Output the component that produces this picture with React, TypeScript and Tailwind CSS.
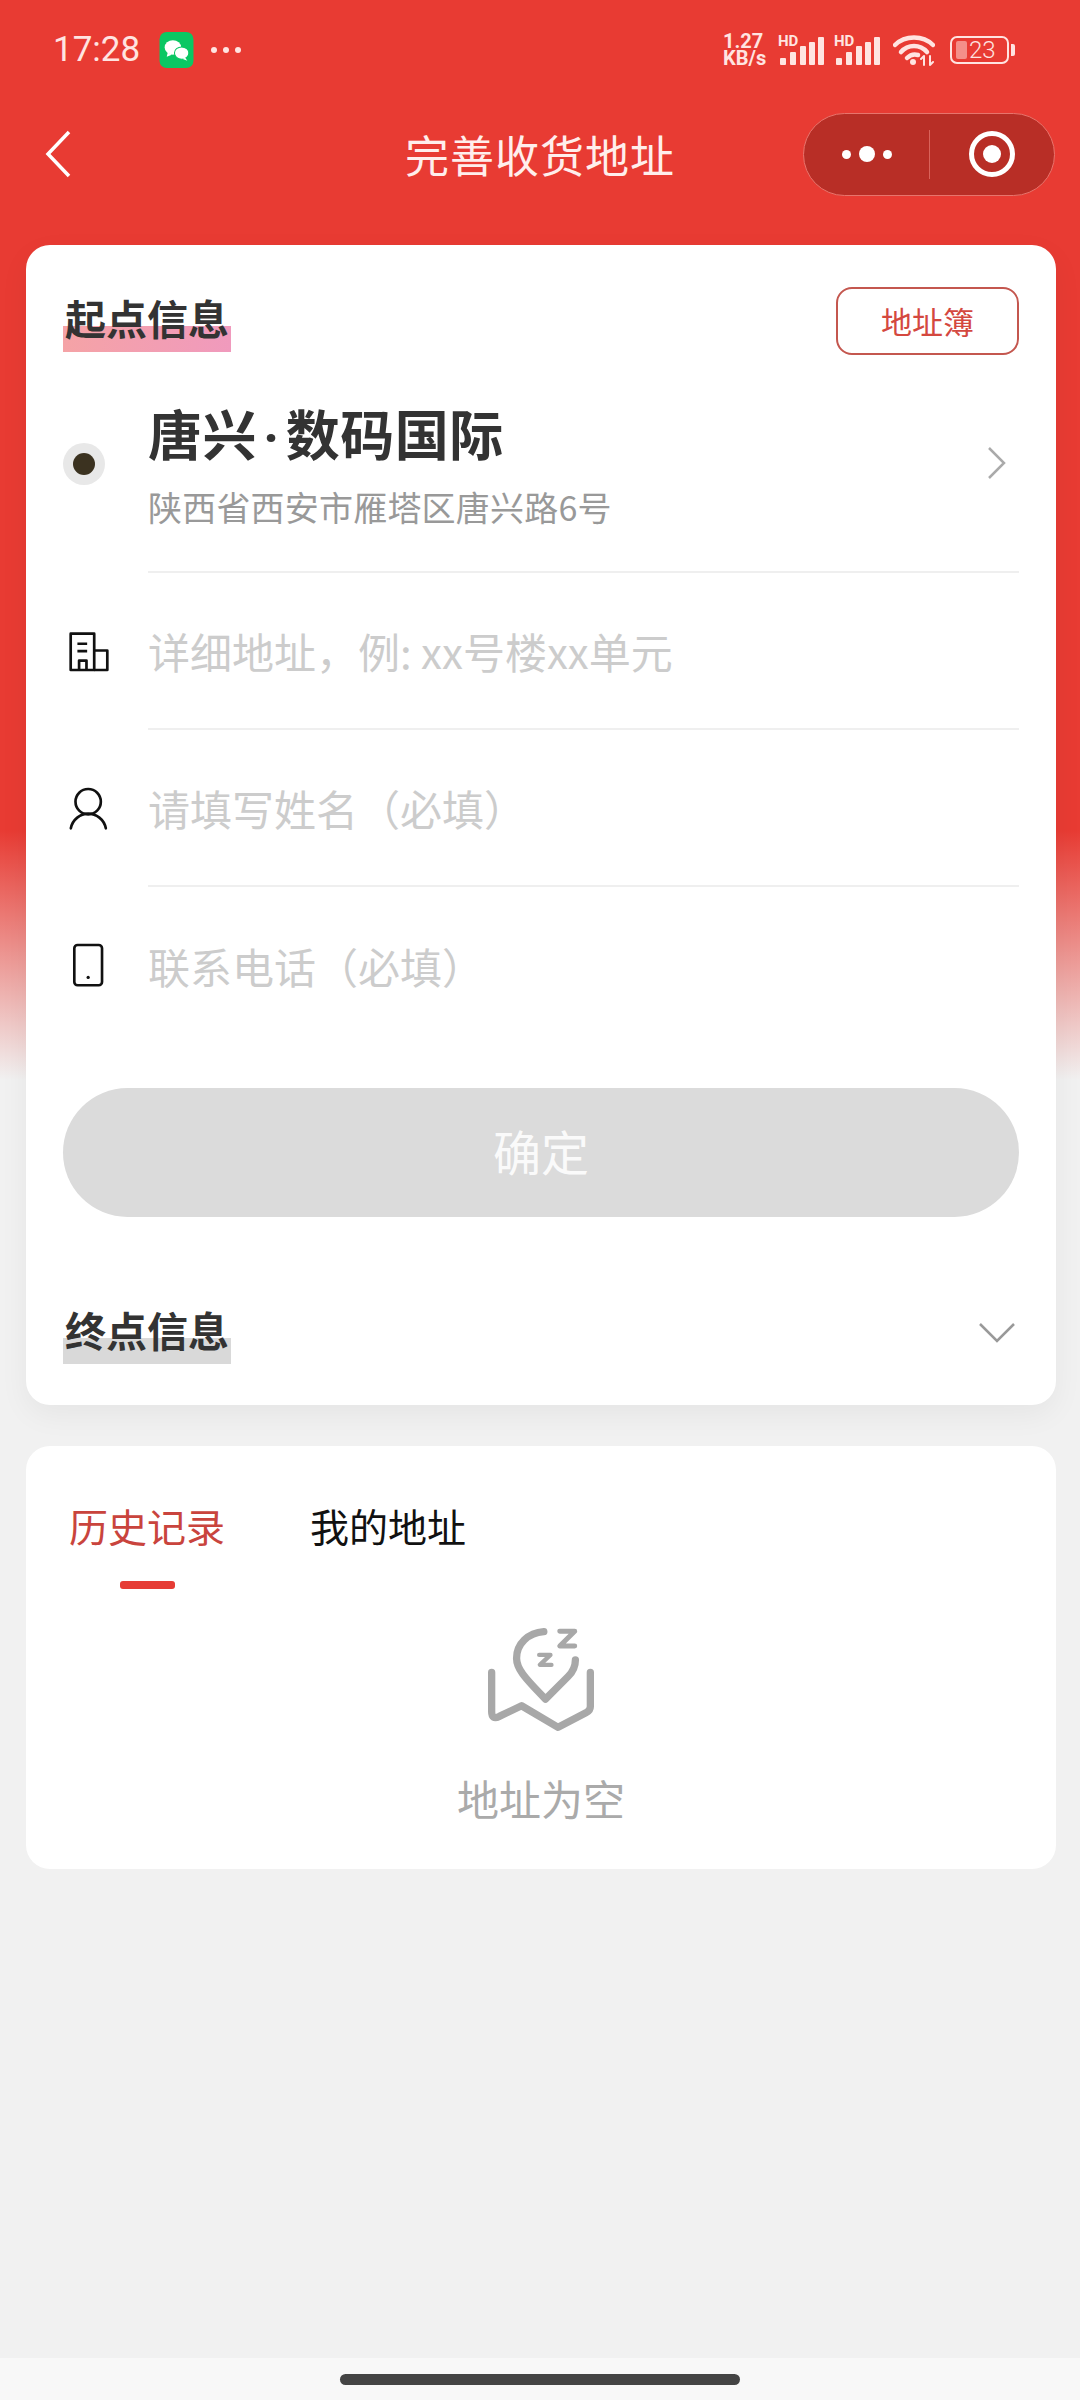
const CJK = 'font-["Noto_Sans_CJK_SC",sans-serif]';

function SignalIcon() {
  return (
    <div className="relative w-[45px] h-[30px]">
      <svg viewBox="0 0 45 30" className="w-[45px] h-[30px]" fill="#ffe4e1">
        <rect x="0" y="23" width="6" height="7" rx="1" />
        <rect x="10" y="17" width="6" height="13" rx="1" />
        <rect x="20" y="11" width="6" height="19" rx="1" />
        <rect x="29" y="7" width="6" height="23" rx="1" />
        <rect x="38" y="2" width="6" height="28" rx="1" />
      </svg>
      <span className='absolute left-[-2px] top-[-1px] font-["Roboto",sans-serif] font-bold text-[15px] leading-[14px] text-[#ffe4e1]'>HD</span>
    </div>
  );
}

function StatusBar() {
  return (
    <div className='flex items-center justify-between h-[100px] pl-[53px] pr-[65px] font-["Roboto",sans-serif] text-[#ffe4e1]'>
      <div className="flex items-center">
        <span className="text-[35px] leading-[40px] w-[106px]">17:28</span>
        <svg viewBox="0 0 33 35" className="w-[35px] h-[36px]">
          <rect width="33" height="35" rx="7" fill="#0ac763" />
          <ellipse cx="13" cy="15" rx="8" ry="7" fill="#fff" />
          <path d="M8 20l-1 4 5-2z" fill="#fff" />
          <ellipse cx="21.5" cy="20.5" rx="7" ry="6" fill="#fff" stroke="#0ac763" strokeWidth="1" />
          <path d="M25 25l2 3-5-2z" fill="#fff" />
        </svg>
        <div className="flex gap-[6px] ml-[17px]">
          <span className="w-[6px] h-[6px] rounded-full bg-[#ffe4e1]" />
          <span className="w-[6px] h-[6px] rounded-full bg-[#ffe4e1]" />
          <span className="w-[6px] h-[6px] rounded-full bg-[#ffe4e1]" />
        </div>
      </div>
      <div className="flex items-center">
        <div className="font-bold text-[20px] leading-[17px] w-[57px]">
          1.27<br />KB/s
        </div>
        <SignalIcon />
        <div className="w-[11px]" />
        <SignalIcon />
        <svg viewBox="0 0 42 32" className="w-[42px] h-[32px] ml-[12px]" fill="none" stroke="#ffe4e1" strokeWidth="4.5" strokeLinecap="round">
          <path d="M2 11C12 1 30 1 40 11" />
          <path d="M8 18C15 10 27 10 34 18" />
          <path d="M14 24C18 20 22 20 25 21" />
          <circle cx="20" cy="28" r="3" fill="#ffe4e1" stroke="none" />
          <path strokeWidth="2" d="M31 22V31M37 22V31M28 25L31 22M37 31L40 28" />
        </svg>
        <div className="flex items-center ml-[15px]">
          <div className="w-[59px] h-[28px] rounded-[7px] border-[2px] border-[#ffe4e1] flex items-center">
            <span className="w-[11px] h-[18px] ml-[4px] rounded-[2px] bg-[#f48f89]" />
            <span className="ml-[2px] text-[24px] leading-[24px] font-light">23</span>
          </div>
          <span className="w-[4px] h-[12px] ml-[2px] rounded-r-[2px] bg-[#ffe4e1]" />
        </div>
      </div>
    </div>
  );
}

function NavBar() {
  return (
    <div className="grid grid-cols-[1fr_auto_1fr] items-center h-[108px] pl-[25px] pr-[25px]">
      <svg viewBox="0 0 28 48" className="w-[28px] h-[48px] ml-[19px]" fill="none" stroke="#fff" strokeWidth="3.5">
        <path d="M25 2L4 24l21 22" />
      </svg>
      <div className={`${CJK} text-[44px] leading-[60px] tracking-[1px] text-[#ffeeec]`}>完善收货地址</div>
      <div className="justify-self-end flex items-center w-[252px] h-[83px] rounded-full bg-[#b82e26] border border-[#e8746c]">
        <div className="flex items-center justify-center gap-[8px] w-[125px]">
          <span className="w-[9px] h-[9px] rounded-full bg-white" />
          <span className="w-[16px] h-[16px] rounded-full bg-white" />
          <span className="w-[9px] h-[9px] rounded-full bg-white" />
        </div>
        <div className="w-px h-[49px] bg-[#d9635b]" />
        <div className="flex items-center justify-center flex-1">
          <div className="flex items-center justify-center w-[46px] h-[46px] rounded-full border-[5px] border-white">
            <span className="w-[18px] h-[18px] rounded-full bg-white" />
          </div>
        </div>
      </div>
    </div>
  );
}

function SectionTitle({ children, highlight }: { children: string; highlight: string }) {
  return (
    <div className={`${highlight} bg-no-repeat bg-bottom bg-[length:100%_26px] w-[168px] h-[52px] text-center ${CJK} font-bold text-[41px] leading-[34px] text-[#333]`}>
      {children}
    </div>
  );
}

function BuildingIcon() {
  return (
    <svg viewBox="205 150 125 125" className="w-[42px] h-[42px] ml-[5px]" fill="none" stroke="#111" strokeWidth="8" strokeLinejoin="round">
      <path d="M213 158H283V266H213Z" />
      <path d="M283 208H322V266H283" />
      <path d="M233 188H262M233 210H262M238 266V238H260V266" />
    </svg>
  );
}

function PersonIcon() {
  return (
    <svg viewBox="200 620 125 135" className="w-[42px] h-[45px] ml-[4px]" fill="none" stroke="#111" strokeWidth="8" strokeLinecap="round">
      <circle cx="263" cy="667" r="38" />
      <path d="M211 747C216 720 240 703 263 703C287 703 311 720 316 747" />
    </svg>
  );
}

function PhoneIcon() {
  return (
    <svg viewBox="215 1090 100 140" className="w-[33px] h-[47px] ml-[9px]" fill="none" stroke="#111" strokeWidth="8">
      <rect x="222" y="1098" width="84" height="122" rx="10" />
      <circle cx="264" cy="1196" r="5" fill="#111" stroke="none" />
    </svg>
  );
}

function InputRow({ icon, placeholder, last }: { icon: React.ReactNode; placeholder: string; last?: boolean }) {
  return (
    <div className="flex h-[157px]">
      <div className="flex items-center w-[85px] shrink-0">{icon}</div>
      <div className={`flex items-center flex-1 ${last ? '' : 'border-b-2 border-[#efefef]'}`}>
        <span className={`${CJK} text-[42px] leading-[50px] text-[#cccccc]`}>{placeholder}</span>
      </div>
    </div>
  );
}

function EmptyIcon() {
  return (
    <svg viewBox="255 195 340 325" className="w-[113px] h-[108px]" fill="none" stroke="#a8a8a8" strokeLinecap="round" strokeLinejoin="round">
      <path strokeWidth="22" d="M275 338V455Q275 482 298 470L365 438L475 503L560 458Q572 452 572 440V338" />
      <path strokeWidth="22" d="M432 215C385 218 350 252 350 295C350 325 370 350 437 418L505 350C520 335 527 318 527 300" />
      <path strokeWidth="15" d="M480 214H525L480 258H525" />
      <path strokeWidth="13" d="M418 285H452L420 315H455" />
    </svg>
  );
}

export default function App() {
  return (
    <div className="flex flex-col w-[1080px] h-[2400px] bg-[linear-gradient(180deg,#e83b33_0px,#e83b33_830px,#f1f1f1_1080px)]">
      <StatusBar />
      <NavBar />

      <div className="ml-[26px] mr-[24px] mt-[37px] px-[37px] pt-[42px] pb-[41px] bg-white rounded-[24px] shadow-[0_10px_30px_rgba(0,0,0,0.05)]">
        <div className="flex items-start justify-between">
          <div className="mt-[13px]">
            <SectionTitle highlight="bg-[linear-gradient(90deg,#f5a3a6,#f09abd)]">起点信息</SectionTitle>
          </div>
          <button className={`w-[183px] h-[68px] rounded-[16px] border-2 border-[#c4574f] ${CJK} text-[31px] text-[#d4483f]`}>地址簿</button>
        </div>

        <div className="flex mt-[50px] h-[168px]">
          <div className="w-[85px] shrink-0">
            <div className="flex items-center justify-center w-[42px] h-[42px] mt-[38px] rounded-full bg-[#e8e8e8]">
              <span className="w-[22px] h-[22px] rounded-full bg-[#3b3220]" />
            </div>
          </div>
          <div className="flex items-start justify-between flex-1 border-b-2 border-[#efefef]">
            <div>
              <div className={`${CJK} font-bold text-[54px] leading-[56px] tracking-[0.5px] text-[#333]`}>
                唐兴<span className='font-["Roboto",sans-serif] mx-[6px]'>·</span>数码国际
              </div>
              <div className={`${CJK} mt-[21px] text-[34px] leading-[40px] tracking-[0.2px] text-[#999]`}>陕西省西安市雁塔区唐兴路6号</div>
            </div>
            <svg viewBox="0 0 20 34" className="w-[20px] h-[34px] mt-[41px] mr-[12px]" fill="none" stroke="#aaa" strokeWidth="2.5">
              <path d="M2 2l15 15L2 32" />
            </svg>
          </div>
        </div>

        <InputRow icon={<BuildingIcon />} placeholder="详细地址，例: xx号楼xx单元" />
        <InputRow icon={<PersonIcon />} placeholder="请填写姓名（必填）" />
        <InputRow icon={<PhoneIcon />} placeholder="联系电话（必填）" last />

        <button className={`block w-full h-[129px] mt-[44px] pb-[5px] rounded-full bg-[#dbdbdb] ${CJK} text-[48px] text-[#fafafa]`}>确定</button>

        <div className="flex items-center justify-between mt-[95px]">
          <SectionTitle highlight="bg-[linear-gradient(90deg,#d9d9d9,#d9d9d9)]">终点信息</SectionTitle>
          <svg viewBox="0 0 38 24" className="w-[38px] h-[24px] mr-[3px] mb-[10px]" fill="none" stroke="#999" strokeWidth="2.5">
            <path d="M2 3l17 17L36 3" />
          </svg>
        </div>
      </div>

      <div className="flex flex-col ml-[26px] mr-[24px] mt-[41px] pt-[57px] pb-[49px] bg-white rounded-[24px]">
        <div className={`flex gap-[85px] pl-[43px] ${CJK} text-[39px] leading-[44px]`}>
          <div className="flex flex-col items-center">
            <span className="text-[#c9443d]">历史记录</span>
            <span className="w-[55px] h-[8px] mt-[34px] rounded-[3px] bg-[#e63c35]" />
          </div>
          <span className="text-[#111]">我的地址</span>
        </div>
        <div className="flex flex-col items-center mt-[36px]">
          <EmptyIcon />
          <span className={`mt-[43px] ${CJK} text-[42px] leading-[44px] text-[#aaa]`}>地址为空</span>
        </div>
      </div>

      <div className="mt-auto h-[42px] pt-[16px] bg-[#f8f8f8]">
        <div className="w-[400px] h-[11px] mx-auto rounded-full bg-[#444]" />
      </div>
    </div>
  );
}
